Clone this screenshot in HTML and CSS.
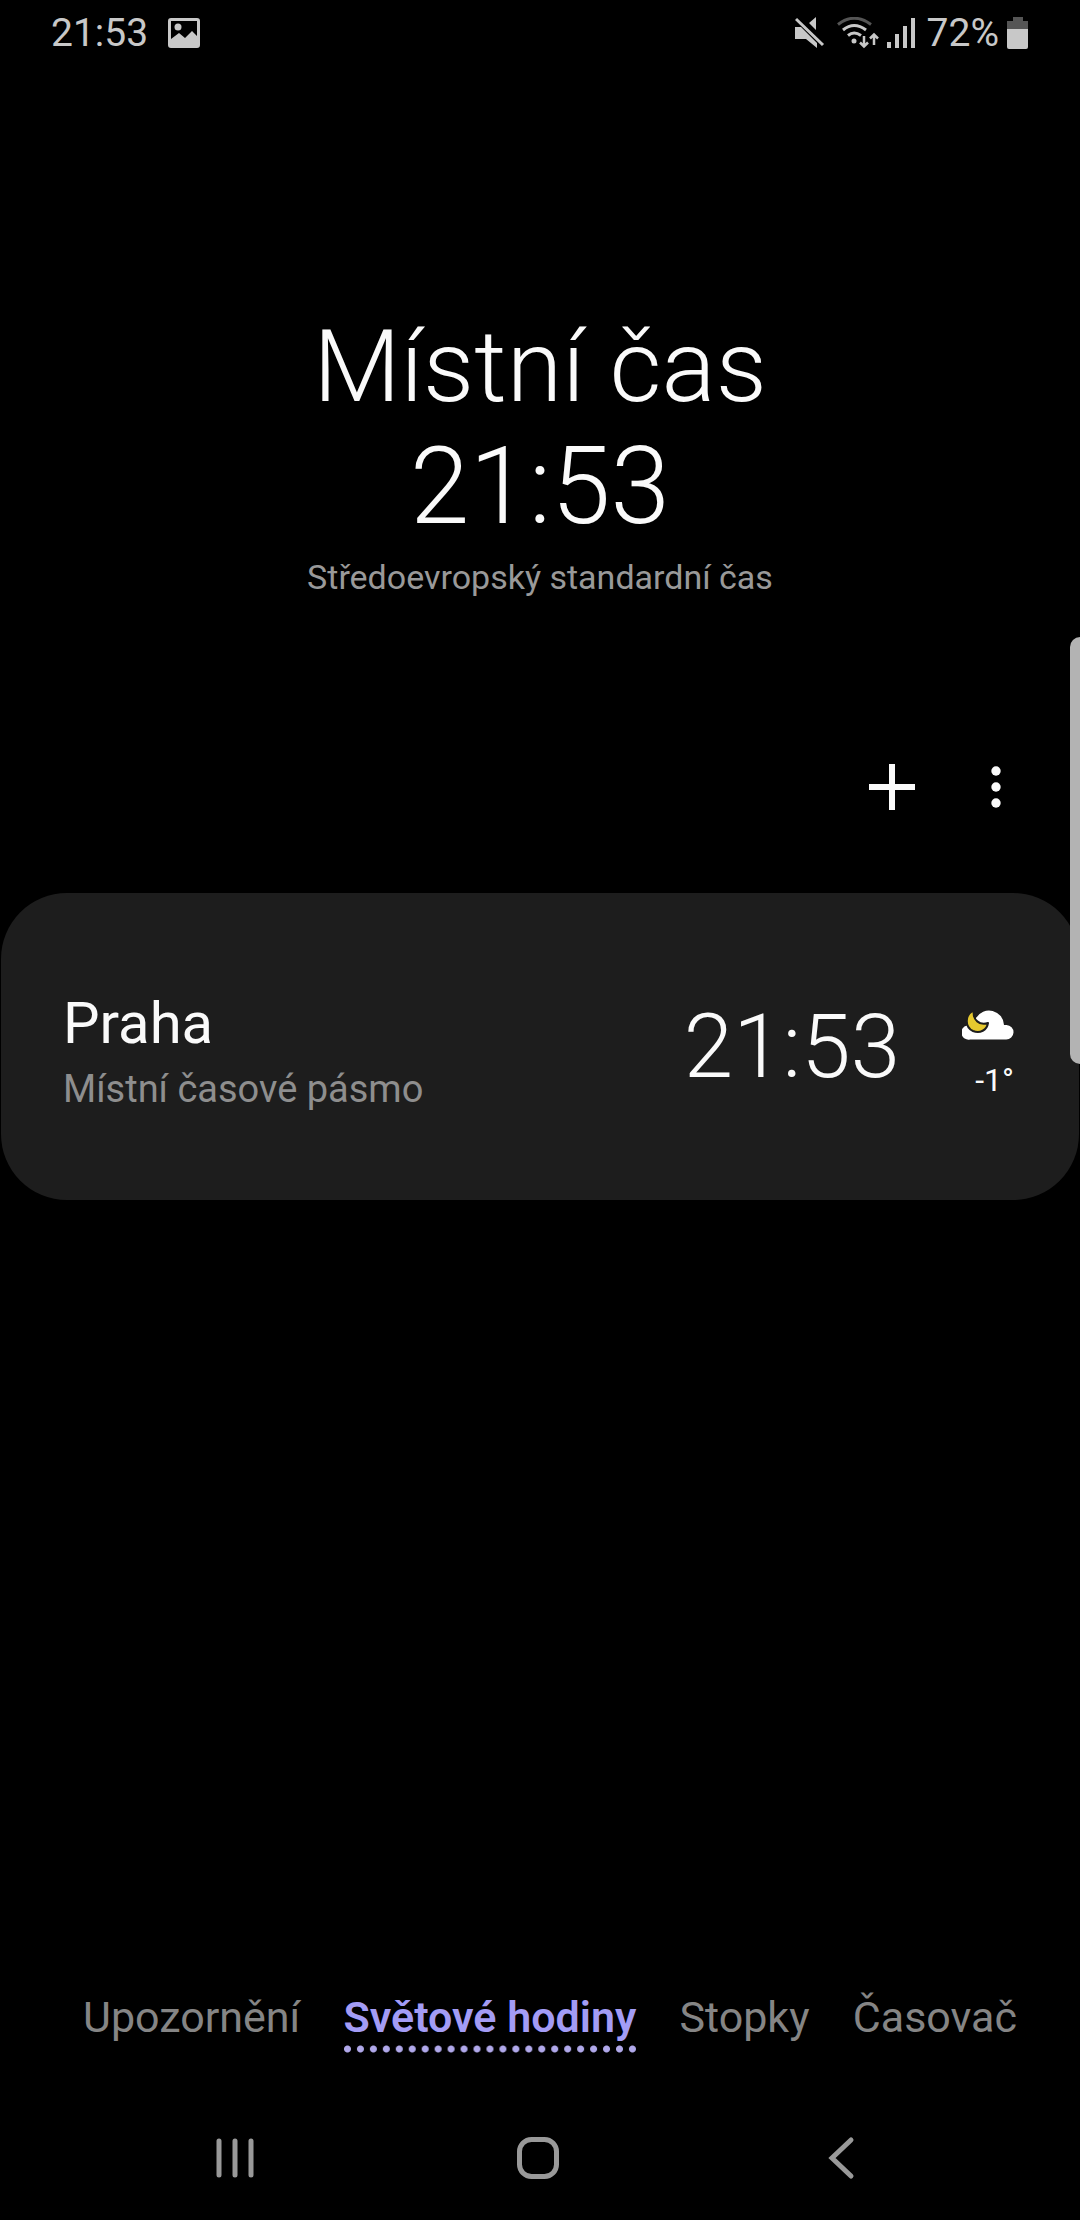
FILE: index.html
```html
<!DOCTYPE html>
<html lang="cs">
<head>
<meta charset="utf-8">
<meta name="viewport" content="width=device-width, initial-scale=1">
<title>Světové hodiny</title>
<link rel="stylesheet" href="styles.css">
</head>
<body>
<div class="screen">
  <header class="status">
    <span class="status-time">21:53</span>
    <svg class="icon-picture" width="32" height="30" viewBox="0 0 32 30" aria-hidden="true">
      <path fill="currentColor" fill-rule="evenodd" d="M3 0H29a3 3 0 0 1 3 3V27a3 3 0 0 1-3 3H3a3 3 0 0 1-3-3V3a3 3 0 0 1 3-3ZM3 3V21L11 15L17 20L24 13L29 18V3Z"/>
      <circle cx="10" cy="9" r="3.5" fill="currentColor"/>
    </svg>
    <div class="status-icons">
      <svg class="icon-mute" width="30" height="32" viewBox="0 0 30 32" aria-hidden="true">
        <path fill="currentColor" d="M0 10H6L22 26V31L11 22H0ZM14 6L21 0V13Z"/>
        <path stroke="currentColor" stroke-width="3" d="M1 2L28 28"/>
      </svg>
      <svg class="icon-wifi" width="42" height="32" viewBox="0 0 42 32" fill="none" stroke="currentColor" stroke-width="3" aria-hidden="true">
        <path stroke="#555" d="M1 7.500Q17-5 34 7.500"/>
        <path d="M6 13Q17 4 29 13"/>
        <path d="M11 18.500Q17 13.500 24 18.500"/>
        <circle cx="17" cy="24" r="2.500" fill="currentColor" stroke="none"/>
        <path stroke-width="2.500" d="M27 19V29M23 25.500L27 29.500L31 25.500M37 28V18M33 21.500L37 17.500L41 21.500"/>
      </svg>
      <svg class="icon-signal" width="28" height="30" viewBox="0 0 28 30" fill="currentColor" aria-hidden="true">
        <path d="M0 24H4V30H0ZM8 16H12V30H8ZM16 8H20V30H16ZM24 0H28V30H24Z"/>
      </svg>
      <span class="battery-level">72%</span>
      <svg class="icon-battery" width="22" height="32" viewBox="0 0 22 32" aria-hidden="true">
        <path fill="#555" d="M6 0H16V4H21V13H0V4H6Z"/>
        <path fill="currentColor" d="M0 12H21V30Q21 32 19 32H2Q0 32 0 30Z"/>
      </svg>
    </div>
  </header>

  <main class="content">
    <section class="hero">
      <h1 class="hero-title">Místní čas</h1>
      <p class="hero-time">21:53</p>
      <p class="hero-zone">Středoevropský standardní čas</p>
    </section>

    <div class="toolbar">
      <button class="tool" type="button" aria-label="Přidat město">
        <svg width="46" height="46" viewBox="0 0 46 46"><path fill="currentColor" d="M20 0H26V20H46V26H26V46H20V26H0V20H20Z"/></svg>
      </button>
      <button class="tool" type="button" aria-label="Další možnosti">
        <svg width="10" height="42" viewBox="0 0 10 42" fill="currentColor"><circle cx="5" cy="5" r="4.700"/><circle cx="5" cy="21" r="4.700"/><circle cx="5" cy="37" r="4.700"/></svg>
      </button>
    </div>

    <article class="card">
      <div class="place">
        <h2 class="city">Praha</h2>
        <p class="zone">Místní časové pásmo</p>
      </div>
      <p class="card-time">21:53</p>
      <div class="weather">
        <svg width="52" height="30" viewBox="0 0 52 30" aria-hidden="true">
          <path fill="#fff" d="M8 29.500A7 7 0 0 1 5 15.500L14 8A15 15 0 0 1 42 15H44.500A7.200 7.200 0 0 1 44 29.500Z"/>
          <path fill="#e6c92f" stroke="#1d1d1d" stroke-width="2" stroke-linejoin="round" d="M12 0C2 5 3 17 11 21C18 24 25 20 26 13C18 16 10 10 12 0Z"/>
        </svg>
        <span class="temp">-1°</span>
      </div>
    </article>
  </main>

  <nav class="tabs" aria-label="Hodiny">
    <button class="tab" type="button">Upozornění</button>
    <button class="tab tab-active" type="button" aria-current="page">Světové hodiny</button>
    <button class="tab" type="button">Stopky</button>
    <button class="tab" type="button">Časovač</button>
  </nav>

  <footer class="system-nav">
    <button class="key" type="button" aria-label="Poslední aplikace">
      <svg width="44" height="44" viewBox="0 0 44 44" fill="none" stroke="currentColor" stroke-width="5" stroke-linecap="round"><path d="M6 5V39M22 5V39M38 5V39"/></svg>
    </button>
    <button class="key" type="button" aria-label="Domů">
      <svg width="44" height="44" viewBox="0 0 44 44" fill="none" stroke="currentColor" stroke-width="5"><rect x="3.500" y="3.500" width="37" height="37" rx="12"/></svg>
    </button>
    <button class="key" type="button" aria-label="Zpět">
      <svg width="44" height="44" viewBox="0 0 44 44" fill="none" stroke="currentColor" stroke-width="5" stroke-linecap="round"><path d="M32 4L13 22L32 40"/></svg>
    </button>
  </footer>

  <div class="edge-handle"></div>
</div>
</body>
</html>
```
FILE: styles.css
```css
* {
  box-sizing: border-box;
}

body {
  margin: 0;
  background: #000;
  color: #fafafa;
  font-family: Roboto, "Noto Sans", sans-serif;
}

h1,
h2,
p {
  margin: 0;
  font-weight: 400;
}

button {
  border: 0;
  padding: 0;
  background: none;
  color: inherit;
  font: inherit;
}

svg {
  display: block;
  flex: none;
}

.screen {
  position: relative;
  display: flex;
  flex-direction: column;
  min-height: 100vh;
}

/* Status bar */
.status {
  display: flex;
  align-items: center;
  gap: 20px;
  height: 66px;
  padding: 0 51px;
  color: #c8c8c8;
  font-size: 39px;
  line-height: 66px;
}

.status-icons {
  display: flex;
  align-items: center;
  gap: 8px;
  margin-left: auto;
}

.icon-mute {
  margin-right: 4px;
}

.battery-level {
  margin-left: 4px;
}

/* Local time */
.content {
  flex: 1;
}

.hero {
  padding-top: 241px;
  text-align: center;
}

.hero-title,
.hero-time {
  font-weight: 300;
  line-height: 120px;
}

.hero-title {
  font-size: 101px;
}

.hero-time {
  font-size: 107px;
}

.hero-zone {
  color: #999;
  font-size: 34px;
  line-height: 60px;
}

.toolbar {
  display: flex;
  justify-content: flex-end;
  gap: 8px;
  padding: 132px 36px 58px;
}

.tool {
  display: grid;
  place-items: center;
  width: 96px;
  height: 96px;
}

/* City card */
.card {
  display: flex;
  align-items: center;
  min-height: 307px;
  margin: 0 1px;
  padding: 0 65px 0 62px;
  border-radius: 66px;
  background: #1d1d1d;
}

.place {
  display: grid;
  flex: 1;
  gap: 4px;
  padding-top: 12px;
}

.city {
  font-size: 58px;
  line-height: 68px;
}

.zone {
  color: #8e8e8e;
  font-size: 38px;
  line-height: 56px;
}

.card-time {
  font-size: 89px;
  font-weight: 300;
  line-height: 108px;
}

.weather {
  display: flex;
  flex-direction: column;
  align-items: flex-end;
  gap: 20px;
  margin-left: 62px;
  padding-top: 16px;
}

.temp {
  font-size: 32px;
  line-height: 40px;
}

/* Tabs */
.tabs {
  display: flex;
  justify-content: space-between;
  padding: 0 63px 0 83px;
}

.tab {
  position: relative;
  color: #858585;
  font-size: 43px;
  line-height: 80px;
}

.tab-active {
  color: #a39cf5;
  font-weight: 600;
}

.tab-active::after {
  content: "";
  position: absolute;
  right: -3px;
  bottom: 4px;
  left: -3px;
  height: 8px;
  background: radial-gradient(circle, #b0a8ea 3px, transparent 4px) 0 0 / 13px 8px round;
}

/* System keys */
.system-nav {
  display: flex;
  height: 124px;
  margin-top: 39px;
  padding: 0 88px 0 84px;
  color: #999;
}

.key {
  display: grid;
  flex: 1;
  place-items: center;
}

/* Edge panel handle */
.edge-handle {
  position: absolute;
  top: 637px;
  right: 0;
  width: 10px;
  height: 427px;
  border-radius: 12px 0 0 12px;
  background: #b3b3b3;
}
```
